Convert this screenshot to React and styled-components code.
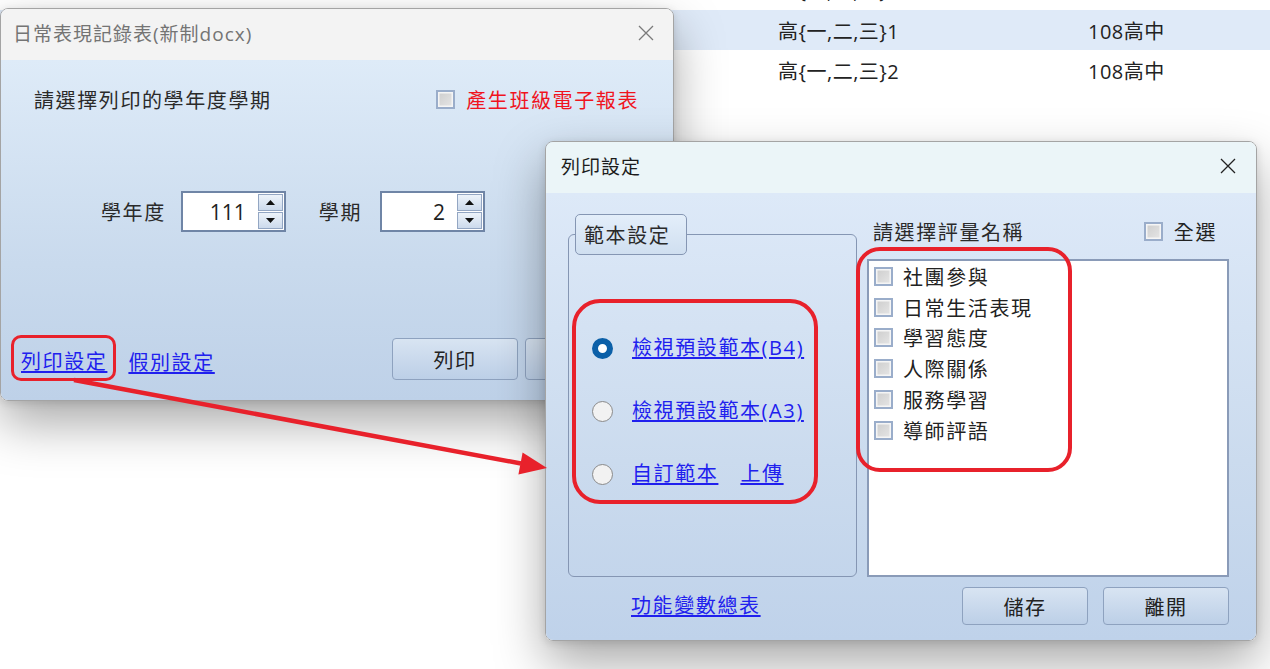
import React from 'react'
import styled, { createGlobalStyle } from 'styled-components'

const GlobalStyle = createGlobalStyle`
  html, body {
    margin: 0;
    padding: 0;
    background: #fff;
  }
  body {
    font-family: "Open Sans", "Noto Sans CJK TC", sans-serif;
    color: #222;
  }
`

const backRows = [
  { id: 0, klass: '高{一,二,三}0', school: '108高中' },
  { id: 1, klass: '高{一,二,三}1', school: '108高中', selected: true },
  { id: 2, klass: '高{一,二,三}2', school: '108高中' },
]

const evalItems = ['社團參與', '日常生活表現', '學習態度', '人際關係', '服務學習', '導師評語']

const CloseIcon = ({ color }) => (
  <svg width="16" height="16" viewBox="0 0 16 16">
    <path d="M1 1L15 15M15 1L1 15" stroke={color} strokeWidth="1.3" fill="none" />
  </svg>
)

const SpinBox = ({ value }) => (
  <StyledSpin>
    <SpinValue>{value}</SpinValue>
    <SpinButtons>
      <SpinButton>
        <svg width="9" height="5" viewBox="0 0 9 5"><path d="M4.5 0L9 5H0Z" fill="#111" /></svg>
      </SpinButton>
      <SpinButton>
        <svg width="9" height="5" viewBox="0 0 9 5"><path d="M0 0H9L4.5 5Z" fill="#111" /></svg>
      </SpinButton>
    </SpinButtons>
  </StyledSpin>
)

const App = () => {
  return (
    <Desktop>
      <GlobalStyle />
      <BackTable>
        {backRows.map(row => (
          <BackRow key={row.id} $selected={row.selected}>
            <span />
            <BackCell>{row.klass}</BackCell>
            <BackCell>{row.school}</BackCell>
          </BackRow>
        ))}
      </BackTable>

      <Window $left={0} $top={8} $width={674} $height={393}>
        <TitleBar $bg="#f3f3f3" $color="#747474" $padLeft={12} $padRight={19}>
          <span>日常表現記錄表(新制docx)</span>
          <CloseIcon color="#7a7a7a" />
        </TitleBar>
        <LeftBody>
          <HeaderRow>
            <Heading>請選擇列印的學年度學期</Heading>
            <CheckLabel $color="#f0141e">
              <CheckBox />
              產生班級電子報表
            </CheckLabel>
          </HeaderRow>
          <SpinRow>
            <FieldLabel $gap={15}>學年度</FieldLabel>
            <SpinBox value="111" />
            <FieldLabel $gap={18} $before={33}>學期</FieldLabel>
            <SpinBox value="2" />
          </SpinRow>
          <BottomRow>
            <AnnotLink>
              <Link>列印設定</Link>
            </AnnotLink>
            <PlainLink>假別設定</PlainLink>
            <ButtonGroup>
              <Button $height={42}>列印</Button>
              <Button $height={42}>離開</Button>
            </ButtonGroup>
          </BottomRow>
        </LeftBody>
      </Window>

      <Window $left={545} $top={141} $width={712} $height={500}>
        <TitleBar $bg="#ebf5f8" $color="#1c1c1c" $padLeft={15} $padRight={20}>
          <span>列印設定</span>
          <CloseIcon color="#222" />
        </TitleBar>
        <RightBody>
          <GroupBox>
            <GroupTab>範本設定</GroupTab>
            <GroupFrame>
              <RadioAnnot>
                <RadioRow>
                  <Radio $checked />
                  <Link>檢視預設範本(B4)</Link>
                </RadioRow>
                <RadioRow>
                  <Radio />
                  <Link>檢視預設範本(A3)</Link>
                </RadioRow>
                <RadioRow>
                  <Radio />
                  <Link>自訂範本</Link>
                  <UploadLink>上傳</UploadLink>
                </RadioRow>
              </RadioAnnot>
            </GroupFrame>
          </GroupBox>

          <ListColumn>
            <ListHeader>
              <Heading>請選擇評量名稱</Heading>
              <CheckLabel $color="#222">
                <CheckBox />
                全選
              </CheckLabel>
            </ListHeader>
            <ListBox>
              {evalItems.map(item => (
                <ListItem key={item}>
                  <CheckBox />
                  {item}
                </ListItem>
              ))}
            </ListBox>
            <ListAnnot />
          </ListColumn>

          <FooterRow>
            <FooterLink>功能變數總表</FooterLink>
            <ButtonGroup $gap={15}>
              <Button $height={38}>儲存</Button>
              <Button $height={38}>離開</Button>
            </ButtonGroup>
          </FooterRow>
        </RightBody>
      </Window>

      <ArrowLayer width="1270" height="669" viewBox="0 0 1270 669">
        <line x1="74" y1="380" x2="521" y2="463.5" stroke="#e8212b" strokeWidth="4.5" />
        <polygon points="547,468 518.4,474.5 522.6,452.5" fill="#e8212b" />
      </ArrowLayer>
    </Desktop>
  )
}

const Desktop = styled.div`
  position: relative;
  width: 1270px;
  height: 669px;
  overflow: hidden;
  background: #fff;
`

const BackTable = styled.div`
  position: absolute;
  top: -31px;
  left: 0;
  right: 0;
`

const BackRow = styled.div`
  display: grid;
  grid-template-columns: 778px 310px 1fr;
  align-items: center;
  height: 40px;
  background: ${p => (p.$selected ? '#dfeaf8' : '#fff')};
  &:nth-child(2) {
    margin-top: 1px;
  }
`

const BackCell = styled.span`
  font-size: 20px;
  letter-spacing: 0.5px;
  color: #222;
`

const Window = styled.div`
  position: absolute;
  left: ${p => p.$left}px;
  top: ${p => p.$top}px;
  width: ${p => p.$width}px;
  height: ${p => p.$height}px;
  box-sizing: border-box;
  display: flex;
  flex-direction: column;
  border: 1px solid #a4a4a4;
  border-radius: 8px;
  overflow: hidden;
  box-shadow: 0 22px 50px rgba(0, 0, 0, 0.34), 0 2px 8px rgba(0, 0, 0, 0.12);
`

const TitleBar = styled.div`
  flex-shrink: 0;
  height: 51px;
  box-sizing: border-box;
  display: flex;
  align-items: center;
  justify-content: space-between;
  padding: 0 ${p => p.$padRight}px 3px ${p => p.$padLeft}px;
  background: ${p => p.$bg};
  color: ${p => p.$color};
  font-size: 19px;
  letter-spacing: 1px;
`

const LeftBody = styled.div`
  flex: 1;
  display: flex;
  flex-direction: column;
  background: linear-gradient(180deg, #deebf8 0%, #c9daed 60%, #bed1e8 100%);
`

const HeaderRow = styled.div`
  display: flex;
  align-items: center;
  height: 26px;
  margin-top: 26px;
  padding: 0 34px 0 33px;
`

const Heading = styled.span`
  font-size: 20px;
  letter-spacing: 1.6px;
  color: #2a2a2a;
`

const CheckLabel = styled.span`
  display: flex;
  align-items: center;
  gap: 11px;
  margin-left: auto;
  font-size: 20px;
  letter-spacing: 1.6px;
  color: ${p => p.$color};
`

const CheckBox = styled.span`
  flex-shrink: 0;
  width: 19px;
  height: 19px;
  box-sizing: border-box;
  border: 2px solid #9aadca;
  background: linear-gradient(135deg, #cdcdcd 0%, #e6e6e6 100%);
  box-shadow: inset 0 0 0 1.5px #f5f5f5;
`

const SpinRow = styled.div`
  display: flex;
  align-items: center;
  height: 41px;
  margin-top: 79px;
  padding-left: 100px;
`

const FieldLabel = styled.span`
  margin-left: ${p => p.$before || 0}px;
  margin-right: ${p => p.$gap}px;
  font-size: 20px;
  letter-spacing: 1.6px;
  color: #2a2a2a;
`

const StyledSpin = styled.div`
  display: flex;
  width: 105px;
  height: 41px;
  box-sizing: border-box;
  border: 2px solid #6f85a6;
  background: #fff;
`

const SpinValue = styled.span`
  flex: 1;
  display: flex;
  align-items: center;
  justify-content: flex-end;
  padding-right: 12px;
  font-size: 21px;
  color: #1e1e1e;
`

const SpinButtons = styled.div`
  display: flex;
  flex-direction: column;
  width: 25px;
  padding: 1px 1px 1px 0;
  gap: 1px;
`

const SpinButton = styled.span`
  flex: 1;
  display: flex;
  align-items: center;
  justify-content: center;
  border: 1px solid #93a6c3;
  background: linear-gradient(180deg, #edf3fa 0%, #ccdaec 100%);
`

const BottomRow = styled.div`
  display: flex;
  height: 46px;
  margin-top: auto;
  margin-bottom: 19px;
  padding: 0 22px 0 10px;
`

const AnnotLink = styled.span`
  display: flex;
  align-items: flex-end;
  box-sizing: border-box;
  padding: 0 6px 3px 7px;
  border: 3.5px solid #e8212b;
  border-radius: 10px;
`

const Link = styled.span`
  font-size: 20px;
  letter-spacing: 1.6px;
  color: #2020ee;
  text-decoration: underline;
  text-underline-offset: 2px;
  line-height: 26px;
`

const PlainLink = styled(Link)`
  align-self: flex-end;
  margin-left: 12px;
  padding-bottom: 5px;
`

const ButtonGroup = styled.div`
  display: flex;
  gap: ${p => p.$gap || 7}px;
  margin-left: auto;
  padding-top: ${p => (p.$gap ? 0 : 3)}px;
`

const Button = styled.button`
  width: 126px;
  height: ${p => p.$height}px;
  box-sizing: border-box;
  border: 1px solid #8ea2bf;
  border-radius: 4px;
  background: linear-gradient(180deg, #d8e4f2 0%, #bccfe7 100%);
  font-family: "Open Sans", "Noto Sans CJK TC", sans-serif;
  font-size: 20px;
  letter-spacing: 1.6px;
  color: #222;
  padding: 0;
`

const RightBody = styled.div`
  flex: 1;
  display: grid;
  grid-template-columns: 289px 362px;
  grid-template-rows: 363px 38px;
  column-gap: 10px;
  row-gap: 10px;
  padding: 21px 28px 15px 22px;
  background: linear-gradient(180deg, #dde9f8 0%, #cbdbee 60%, #bfd2ea 100%);
`

const GroupBox = styled.div`
  position: relative;
  box-sizing: border-box;
  padding-top: 20px;
`

const GroupTab = styled.div`
  position: absolute;
  top: 0;
  left: 7px;
  width: 112px;
  height: 41px;
  box-sizing: border-box;
  display: flex;
  align-items: center;
  padding-left: 8px;
  border: 1.5px solid #8596b3;
  border-radius: 5px;
  background: linear-gradient(180deg, #e3eefa 0%, #d0dff0 100%);
  font-size: 20px;
  letter-spacing: 1.6px;
  color: #2a2a2a;
`

const GroupFrame = styled.div`
  height: 100%;
  box-sizing: border-box;
  padding: 64px 0 0 3px;
  border: 1.5px solid #8596b3;
  border-radius: 6px;
`

const RadioAnnot = styled.div`
  width: 246px;
  height: 205px;
  box-sizing: border-box;
  display: flex;
  flex-direction: column;
  gap: 39px;
  padding: 33px 0 0 16px;
  border: 4px solid #e8212b;
  border-radius: 28px;
`

const RadioRow = styled.div`
  display: flex;
  align-items: center;
  height: 24px;
  gap: 19px;
`

const Radio = styled.span`
  flex-shrink: 0;
  width: 21px;
  height: 21px;
  box-sizing: border-box;
  border-radius: 50%;
  border: ${p => (p.$checked ? '6px solid #0c60a8' : '1.5px solid #8a8a8a')};
  background: ${p => (p.$checked ? '#fff' : '#f2f2f2')};
`

const UploadLink = styled(Link)`
  margin-left: 3px;
`

const ListColumn = styled.div`
  position: relative;
  display: flex;
  flex-direction: column;
`

const ListHeader = styled.div`
  display: flex;
  align-items: center;
  height: 34px;
  margin-bottom: 11px;
  padding: 0 12px 0 6px;
`

const ListBox = styled.div`
  flex: 1;
  box-sizing: border-box;
  padding: 0 0 0 5px;
  border: 2px solid #8a9bb8;
  background: #fff;
`

const ListItem = styled.div`
  display: flex;
  align-items: center;
  gap: 10px;
  height: 30.8px;
  font-size: 20px;
  letter-spacing: 1.6px;
  color: #222;
`

const ListAnnot = styled.div`
  position: absolute;
  left: -11px;
  top: 33px;
  width: 216px;
  height: 225px;
  box-sizing: border-box;
  border: 4px solid #e8212b;
  border-radius: 24px;
  pointer-events: none;
`

const FooterRow = styled.div`
  grid-column: 1 / -1;
  display: flex;
  align-items: center;
  padding-left: 63px;
`

const FooterLink = styled(Link)``

const ArrowLayer = styled.svg`
  position: absolute;
  left: 0;
  top: 0;
  pointer-events: none;
`

export default App
